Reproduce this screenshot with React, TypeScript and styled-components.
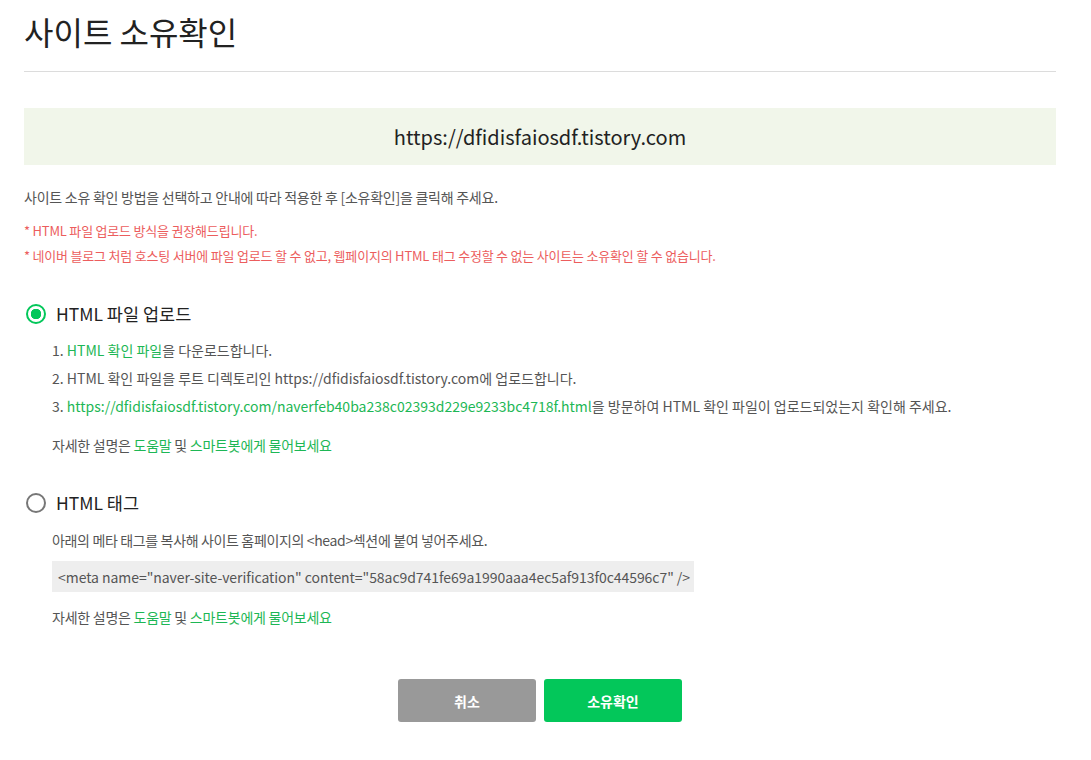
import { createGlobalStyle, styled } from 'styled-components';

const SITE = 'https://dfidisfaiosdf.tistory.com';
const FILE_NAME = 'naverfeb40ba238c02393d229e9233bc4718f.html';
const META = '<meta name="naver-site-verification" content="58ac9d741fe69a1990aaa4ec5af913f0c44596c7" />';

const GlobalStyle = createGlobalStyle`
	body {
		margin: 0;
		background: #fff;
		font-family: 'Noto Sans CJK KR', 'Noto Sans', sans-serif;
		color: #333;
	}
`;

function App() {
	return (
		<Page>
			<GlobalStyle />
			<Title>사이트 소유확인</Title>
			<Divider />
			<SiteBox>{SITE}</SiteBox>
			<Guide>사이트 소유 확인 방법을 선택하고 안내에 따라 적용한 후 [소유확인]을 클릭해 주세요.</Guide>
			<Notices>
				<li>HTML 파일 업로드 방식을 권장해드립니다.</li>
				<li>네이버 블로그 처럼 호스팅 서버에 파일 업로드 할 수 없고, 웹페이지의 HTML 태그 수정할 수 없는 사이트는 소유확인 할 수 없습니다.</li>
			</Notices>

			<Method>
				<RadioLabel>
					<Radio $checked />
					HTML 파일 업로드
				</RadioLabel>
				<Body>
					<Steps>
						<li>
							1. <Link>HTML 확인 파일</Link>을 다운로드합니다.
						</li>
						<li>2. HTML 확인 파일을 루트 디렉토리인 {SITE}에 업로드합니다.</li>
						<li>
							3. <Link>{`${SITE}/${FILE_NAME}`}</Link>을 방문하여 HTML 확인 파일이 업로드되었는지 확인해 주세요.
						</li>
					</Steps>
					<Help>
						자세한 설명은 <Link>도움말</Link> 및 <Link>스마트봇에게 물어보세요</Link>
					</Help>
				</Body>
			</Method>

			<Method>
				<RadioLabel>
					<Radio />
					HTML 태그
				</RadioLabel>
				<Body>
					<Text>아래의 메타 태그를 복사해 사이트 홈페이지의 &lt;head&gt;섹션에 붙여 넣어주세요.</Text>
					<Code>{META}</Code>
					<Help>
						자세한 설명은 <Link>도움말</Link> 및 <Link>스마트봇에게 물어보세요</Link>
					</Help>
				</Body>
			</Method>

			<Buttons>
				<Button>취소</Button>
				<Button $primary>소유확인</Button>
			</Buttons>
		</Page>
	);
}

const Page = styled.div`
	padding: 0 35px 30px 24px;
`;

const Title = styled.h1`
	margin: 0;
	padding-top: 11px;
	font-size: 32px;
	font-weight: 400;
	line-height: 40px;
	color: #222;
`;

const Divider = styled.hr`
	margin: 20px 0 0;
	border: 0;
	border-top: 1px solid #dcdcdc;
`;

const SiteBox = styled.div`
	margin-top: 36px;
	height: 57px;
	display: flex;
	align-items: center;
	justify-content: center;
	background: #f1f6ea;
	font-size: 20px;
	color: #222;
`;

const Guide = styled.p`
	margin: 23px 0 0;
	font-size: 14px;
	line-height: 18px;
	color: #555;
	letter-spacing: -0.25px;
`;

const Notices = styled.ul`
	margin: 12px 0 0;
	padding: 0;
	list-style: none;
	font-size: 13px;
	line-height: 25px;
	color: #ec5d5d;
	letter-spacing: -0.2px;

	li::before {
		content: '* ';
	}
`;

const Method = styled.section`
	margin-top: 34px;

	& + & {
		margin-top: 37px;
	}
`;

const RadioLabel = styled.label`
	display: flex;
	align-items: center;
	gap: 10px;
	font-size: 17.5px;
	line-height: 24px;
	color: #222;
`;

const Radio = styled.span<{ $checked?: boolean }>`
	box-sizing: border-box;
	width: 20px;
	height: 20px;
	margin-left: 2px;
	border-radius: 50%;
	border: 2px solid ${({ $checked }) => ($checked ? '#03c75a' : '#777')};
	background: ${({ $checked }) => ($checked ? 'radial-gradient(circle, #03c75a 0 5px, #fff 5.5px)' : '#fff')};
`;

const Body = styled.div`
	padding-left: 28px;
	font-size: 14px;
	color: #555;
	letter-spacing: -0.2px;
`;

const Steps = styled.ol`
	margin: 10px 0 0;
	padding: 0;
	list-style: none;
	line-height: 28px;
	letter-spacing: 0;
`;

const Text = styled.p`
	margin: 16px 0 0;
	line-height: 18px;
	letter-spacing: -0.35px;
`;

const Link = styled.a`
	color: #1db755;
	cursor: pointer;
`;

const Help = styled.p`
	margin: 16px 0 0;
	line-height: 18px;
	letter-spacing: -0.25px;
`;

const Code = styled.div`
	display: inline-block;
	margin-top: 12px;
	padding: 7px 4px 6px 6px;
	background: #eee;
	line-height: 18px;
	letter-spacing: -0.05px;
`;

const Buttons = styled.div`
	display: flex;
	justify-content: center;
	gap: 8px;
	margin-top: 53px;
`;

const Button = styled.button<{ $primary?: boolean }>`
	width: 138px;
	height: 43px;
	border: 0;
	border-radius: 3px;
	background: ${({ $primary }) => ($primary ? '#03c75a' : '#999')};
	color: #fff;
	font-family: inherit;
	font-size: 14px;
	font-weight: 700;
	cursor: pointer;
`;

export default App;
